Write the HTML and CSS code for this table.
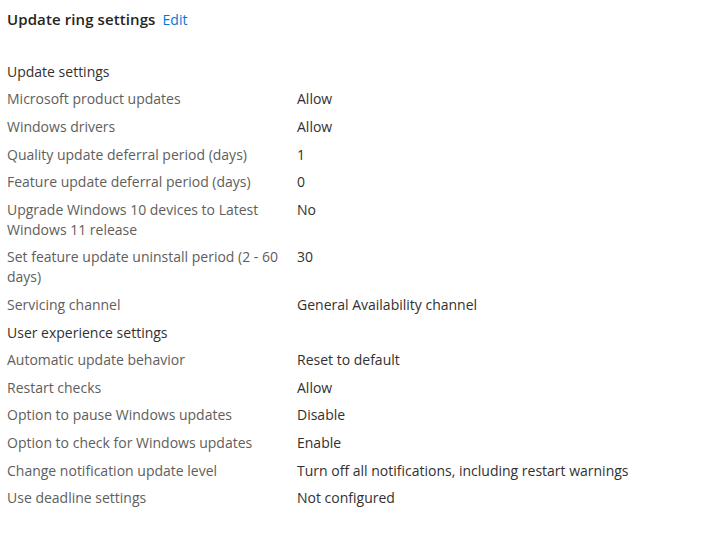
FILE: index.html
```html
<!DOCTYPE html>
<html>
<head>
<meta charset="utf-8">
<link rel="stylesheet" href="styles.css">
</head>
<body>
<div class="page">
  <div class="header">
    <span class="title">Update ring settings</span>
    <a class="edit">Edit</a>
  </div>
  <div class="section">Update settings</div>
  <div class="row"><div class="label">Microsoft product updates</div><div class="value">Allow</div></div>
  <div class="row"><div class="label">Windows drivers</div><div class="value">Allow</div></div>
  <div class="row"><div class="label">Quality update deferral period (days)</div><div class="value">1</div></div>
  <div class="row"><div class="label">Feature update deferral period (days)</div><div class="value">0</div></div>
  <div class="row"><div class="label">Upgrade Windows 10 devices to Latest Windows 11 release</div><div class="value">No</div></div>
  <div class="row"><div class="label">Set feature update uninstall period (2 - 60 days)</div><div class="value">30</div></div>
  <div class="row"><div class="label">Servicing channel</div><div class="value">General Availability channel</div></div>
  <div class="section">User experience settings</div>
  <div class="row"><div class="label">Automatic update behavior</div><div class="value">Reset to default</div></div>
  <div class="row"><div class="label">Restart checks</div><div class="value">Allow</div></div>
  <div class="row"><div class="label">Option to pause Windows updates</div><div class="value">Disable</div></div>
  <div class="row"><div class="label">Option to check for Windows updates</div><div class="value">Enable</div></div>
  <div class="row"><div class="label">Change notification update level</div><div class="value">Turn off all notifications, including restart warnings</div></div>
  <div class="row"><div class="label">Use deadline settings</div><div class="value">Not configured</div></div>
</div>
</body>
</html>
```
FILE: styles.css
```css
html, body {
  margin: 0;
  padding: 0;
  background: #ffffff;
}
.page {
  font-family: "Open Sans", "Noto Sans", sans-serif;
  font-size: 14px;
  color: #323130;
  padding: 8px 7px;
}
.header {
  display: flex;
  align-items: baseline;
  gap: 7px;
  line-height: 22px;
  margin-bottom: 27px;
}
.title {
  font-weight: 600;
  font-size: 15px;
  letter-spacing: 0.1px;
  color: #252423;
}
.edit {
  color: #0078d4;
  font-size: 14px;
}
.section {
  line-height: 20px;
  padding: 3.8px 0;
  color: #323130;
}
.row {
  display: grid;
  grid-template-columns: 290px 1fr;
  line-height: 20px;
  padding: 3.8px 0;
}
.label {
  color: #605e5c;
  padding-right: 4px;
}
.value {
  color: #323130;
}
```
